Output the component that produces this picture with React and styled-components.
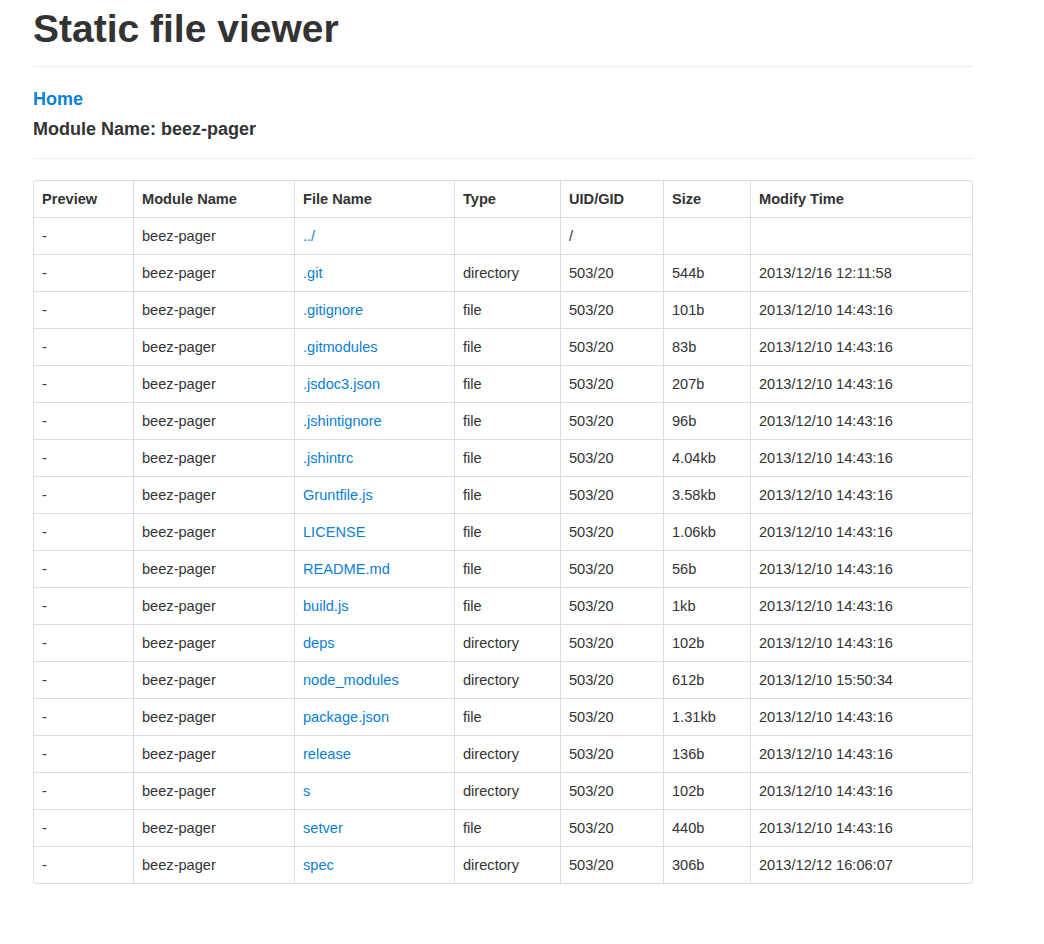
import React from 'react';
import styled, {createGlobalStyle} from 'styled-components';

const GlobalStyle = createGlobalStyle`
    body {
        margin: 0;
        background: #fff;
        font-family: "Liberation Sans", Arial, sans-serif;
        color: #333;
    }
`;

const Container = styled.div`
    width: 940px;
    margin-left: 33px;
    padding-top: 7px;
`;

const PageHeader = styled.div`
    border-bottom: 1px solid #eee;
    padding-bottom: 16px;
`;

const Title = styled.h1`
    margin: 0;
    font-size: 39px;
    line-height: 43px;
    font-weight: 700;
    color: #333;
`;

const Crumbs = styled.div`
    padding: 22px 0 19px;
    border-bottom: 1px solid #eee;
    display: flex;
    flex-direction: column;
    gap: 10px;
`;

const HomeLink = styled.a`
    font-size: 18px;
    line-height: 20px;
    font-weight: 700;
    color: #0b80d4;
    text-decoration: none;
`;

const ModuleTitle = styled.h3`
    margin: 0;
    font-size: 18px;
    line-height: 20px;
    font-weight: 700;
    color: #333;
`;

const Table = styled.table`
    margin-top: 21px;
    width: 939px;
    table-layout: fixed;
    border-collapse: separate;
    border-spacing: 0;
    border: 1px solid #ddd;
    border-left: 0;
    border-radius: 4px;
    font-size: 14.6px;
    line-height: 20px;
`;

const Th = styled.th`
    text-align: left;
    font-weight: 700;
    padding: 8px 8px;
    border-left: 1px solid #ddd;
    vertical-align: middle;
    white-space: nowrap;
`;

const Td = styled.td`
    padding: 8px 8px;
    border-left: 1px solid #ddd;
    border-top: 1px solid #ddd;
    vertical-align: middle;
    white-space: nowrap;
`;

const FileLink = styled.a`
    color: #0b80d4;
    text-decoration: none;
`;

const widths = [100, 161, 160, 106, 103, 87, 222];
const heads = ['Preview', 'Module Name', 'File Name', 'Type', 'UID/GID', 'Size', 'Modify Time'];

const rows = [
    ['../', '', '/', '', ''],
    ['.git', 'directory', '503/20', '544b', '2013/12/16 12:11:58'],
    ['.gitignore', 'file', '503/20', '101b', '2013/12/10 14:43:16'],
    ['.gitmodules', 'file', '503/20', '83b', '2013/12/10 14:43:16'],
    ['.jsdoc3.json', 'file', '503/20', '207b', '2013/12/10 14:43:16'],
    ['.jshintignore', 'file', '503/20', '96b', '2013/12/10 14:43:16'],
    ['.jshintrc', 'file', '503/20', '4.04kb', '2013/12/10 14:43:16'],
    ['Gruntfile.js', 'file', '503/20', '3.58kb', '2013/12/10 14:43:16'],
    ['LICENSE', 'file', '503/20', '1.06kb', '2013/12/10 14:43:16'],
    ['README.md', 'file', '503/20', '56b', '2013/12/10 14:43:16'],
    ['build.js', 'file', '503/20', '1kb', '2013/12/10 14:43:16'],
    ['deps', 'directory', '503/20', '102b', '2013/12/10 14:43:16'],
    ['node_modules', 'directory', '503/20', '612b', '2013/12/10 15:50:34'],
    ['package.json', 'file', '503/20', '1.31kb', '2013/12/10 14:43:16'],
    ['release', 'directory', '503/20', '136b', '2013/12/10 14:43:16'],
    ['s', 'directory', '503/20', '102b', '2013/12/10 14:43:16'],
    ['setver', 'file', '503/20', '440b', '2013/12/10 14:43:16'],
    ['spec', 'directory', '503/20', '306b', '2013/12/12 16:06:07'],
];

const App = () => {
    return (
        <Container>
            <GlobalStyle/>
            <PageHeader>
                <Title>Static file viewer</Title>
            </PageHeader>
            <Crumbs>
                <div><HomeLink href="#">Home</HomeLink></div>
                <ModuleTitle>Module Name: beez-pager</ModuleTitle>
            </Crumbs>
            <Table>
                <colgroup>
                    {widths.map((w, i) => <col key={i} style={{width: w}}/>)}
                </colgroup>
                <thead>
                <tr>
                    {heads.map(h => <Th key={h}>{h}</Th>)}
                </tr>
                </thead>
                <tbody>
                {rows.map(r => (
                    <tr key={r[0]}>
                        <Td>-</Td>
                        <Td>beez-pager</Td>
                        <Td><FileLink href="#">{r[0]}</FileLink></Td>
                        <Td>{r[1]}</Td>
                        <Td>{r[2]}</Td>
                        <Td>{r[3]}</Td>
                        <Td>{r[4]}</Td>
                    </tr>
                ))}
                </tbody>
            </Table>
        </Container>
    );
};

export default App;
